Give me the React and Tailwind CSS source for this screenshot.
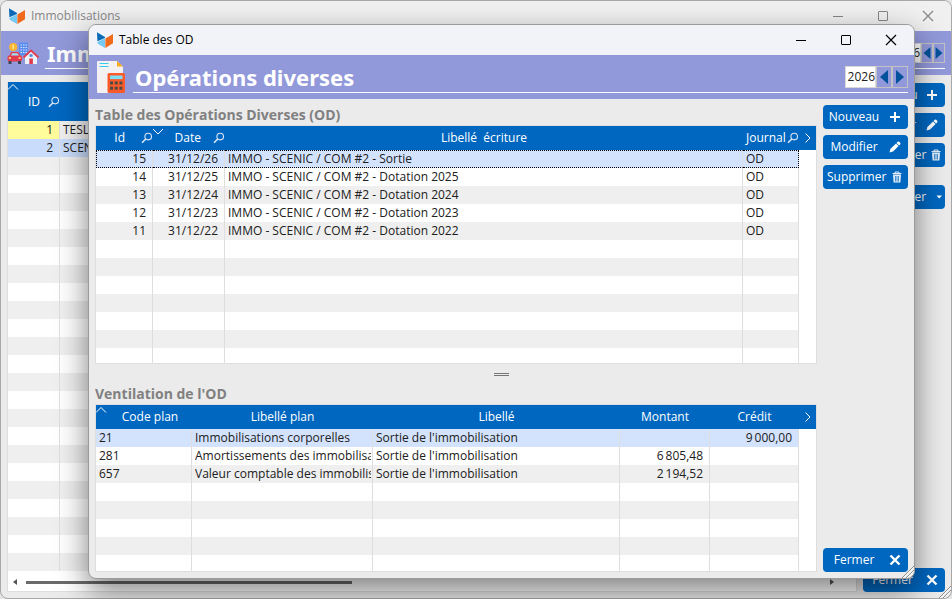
import React, { useState } from 'react';
import { clsx } from 'clsx';

const entries = [
  { id: 15, date: '31/12/26', label: 'IMMO - SCENIC / COM #2 - Sortie', journal: 'OD' },
  { id: 14, date: '31/12/25', label: 'IMMO - SCENIC / COM #2 - Dotation 2025', journal: 'OD' },
  { id: 13, date: '31/12/24', label: 'IMMO - SCENIC / COM #2 - Dotation 2024', journal: 'OD' },
  { id: 12, date: '31/12/23', label: 'IMMO - SCENIC / COM #2 - Dotation 2023', journal: 'OD' },
  { id: 11, date: '31/12/22', label: 'IMMO - SCENIC / COM #2 - Dotation 2022', journal: 'OD' },
];

const lines = [
  { code: '21', plan: 'Immobilisations corporelles', label: "Sortie de l'immobilisation", debit: '', credit: '9\u2009000,00' },
  { code: '281', plan: 'Amortissements des immobilisations', label: "Sortie de l'immobilisation", debit: '6\u2009805,48', credit: '' },
  { code: '657', plan: 'Valeur comptable des immobilisations', label: "Sortie de l'immobilisation", debit: '2\u2009194,52', credit: '' },
];

const assets = [
  { id: 1, name: 'TESLA' },
  { id: 2, name: 'SCENIC' },
];

// Fill a list up with blank rows so the stripes reach the bottom of the grid
const padRows = (rows, count) => [...rows, ...Array(Math.max(0, count - rows.length)).fill({})];

const Logo = () => (
  <svg viewBox="0 0 16 16" className="w-4 h-4 shrink-0">
    <path d="M0 0.3 L8 5 V6 L0.4 9.2 Z" fill="#0a6ab8" />
    <path d="M0.4 10 L8 6.4 V16 L0.8 11.8 Z" fill="#74c8f4" />
    <path d="M8.4 6.4 L16 2 V11.2 L8.4 16 Z" fill="#ef6a1c" />
  </svg>
);

const SearchIcon = () => (
  <svg viewBox="0 0 12 12" className="w-3 h-3 shrink-0" fill="none" stroke="#dbe7f5">
    <circle cx="7.2" cy="4.6" r="3.3" strokeWidth="1.1" />
    <path d="M4.8 7 L1 10.8" strokeWidth="1.6" />
  </svg>
);

const Chevron = ({ d, className }) => (
  <svg viewBox="0 0 12 12" className={clsx('w-3 h-3', className)} fill="none" stroke="#fff">
    <path d={d} />
  </svg>
);
const UP = 'M0 7.5 L5 2.5 L10 7.5';
const DOWN = 'M0 3 L5 8 L10 3';
const RIGHT = 'M3.5 1.5 L8 6 L3.5 10.5';

const PlusIcon = () => (
  <svg viewBox="0 0 12 12" className="w-3 h-3" stroke="#fff" strokeWidth="2"><path d="M6 1 V11 M1 6 H11" /></svg>
);
const PencilIcon = () => (
  <svg viewBox="0 0 12 12" className="w-3 h-3" fill="#fff">
    <path d="M0.5 11.5 L1.4 8 L7 2.4 L9.6 5 L4 10.6 Z" />
    <path d="M7.5 1.9 L8.7 0.8 Q9.5 0.2 10.2 0.8 L11.2 1.8 Q11.8 2.5 11.2 3.3 L10.1 4.5 Z" />
  </svg>
);
const TrashIcon = () => (
  <svg viewBox="0 0 12 12" className="w-3 h-3">
    <path d="M4 2 V1 H8 V2 M1.5 2.5 H10.5" fill="none" stroke="#e3edf8" />
    <path d="M2 3.5 H10 L9.4 11.6 H2.6 Z" fill="#e3edf8" />
    <path d="M4.5 5 V10.5 M6 5 V10.5 M7.5 5 V10.5" stroke="#0067c0" strokeWidth="0.7" />
  </svg>
);
const CrossIcon = () => (
  <svg viewBox="0 0 12 12" className="w-3 h-3" stroke="#fff" strokeWidth="2.4"><path d="M1.5 1.5 L10.5 10.5 M10.5 1.5 L1.5 10.5" /></svg>
);
const CaretIcon = () => (
  <svg viewBox="0 0 12 12" className="w-3 h-3" fill="#fff"><path d="M3.5 4.5 H9 L6.2 7.5 Z" /></svg>
);

const InvoiceIcon = () => (
  <svg viewBox="0 0 28 32" className="w-7 h-8 shrink-0">
    <path d="M0 1 Q0 0 1 0 H20 L26 6 V32 H1 Q0 32 0 31 Z" fill="#f4f1f3" />
    <path d="M20 0 L26 5.5 H20 Z" fill="#fbab18" />
    <path d="M2.5 2.5 H11.5 M2.5 5.5 H11.5" stroke="#34cdea" />
    <rect x="10.5" y="12" width="17.5" height="20" rx="1.5" fill="#fb5b2b" />
    <rect x="13" y="14.5" width="12.5" height="3.6" fill="#7fdff3" />
    <g fill="#4d4a44">
      <rect x="13" y="20.5" width="3" height="3" /><rect x="17.7" y="20.5" width="3" height="3" /><rect x="22.4" y="20.5" width="3" height="3" />
      <rect x="13" y="25.7" width="3" height="3" /><rect x="17.7" y="25.7" width="3" height="3" /><rect x="22.4" y="25.7" width="3" height="3" />
    </g>
  </svg>
);

const AssetsIcon = () => (
  <svg viewBox="0 0 32 24" className="w-8 h-6 shrink-0">
    <rect x="12" y="1.5" width="9" height="13" fill="#5b8def" />
    <path d="M13.5 4 H20 M13.5 6.5 H20 M13.5 9 H20 M13.5 11.5 H20" stroke="#cfe3ff" strokeDasharray="1.5 1" />
    <circle cx="6.2" cy="6" r="4" fill="#fdb62f" />
    <path d="M6.2 3.8 V8.2" stroke="#fff0b8" strokeWidth="1.2" />
    <path d="M3 15 L4.5 11.6 H11 L12.8 15" fill="#9be0f5" stroke="#e33b4e" strokeWidth="1.4" />
    <rect x="0.5" y="14.5" width="14.5" height="6" rx="2" fill="#e33b4e" />
    <path d="M1.5 20 H4.5 V23 H1.5 Z M11 20 H14 V23 H11 Z" fill="#3f4554" />
    <path d="M1.8 17 H4 M11.5 17 H13.7" stroke="#ffe08a" strokeWidth="1.4" />
    <rect x="18" y="15" width="12" height="8" fill="#eaf3fb" />
    <path d="M16.5 16.5 L24 9.5 L31.5 16.5" fill="#eaf3fb" stroke="#e33b4e" strokeWidth="1.8" />
    <rect x="22.3" y="17.5" width="3.6" height="5.5" fill="#e33b4e" />
    <rect x="22.6" y="13.2" width="3" height="2.6" fill="#4f86d9" />
  </svg>
);

const Grip = () => (
  <svg viewBox="0 0 12 12" className="absolute right-0 bottom-0 w-3 h-3" stroke="#8c8c8c">
    <path d="M0 12 L12 0 M4 12 L12 4 M8 12 L12 8" />
    <path d="M1.2 12 L12 1.2 M5.2 12 L12 5.2 M9.2 12 L12 9.2" stroke="#fff" />
  </svg>
);

function TitleBar({ title, muted }) {
  return (
    <header className={clsx('flex items-center pl-2 pr-4 h-[30px] shrink-0 text-xs', muted ? 'bg-[#f0f0f0] text-[#868686]' : 'bg-[#f1f3f9] text-black')}>
      <Logo />
      <span className="ml-[6px] flex-1">{title}</span>
      <div className="flex gap-[31px]">
        <button aria-label="Réduire"><svg viewBox="0 0 14 14" className="w-[14px] h-[14px]" stroke="currentColor"><path d="M2 7.5 H12" /></svg></button>
        <button aria-label="Agrandir"><svg viewBox="0 0 14 14" className="w-[14px] h-[14px]" fill="none" stroke="currentColor"><rect x="2.5" y="2.5" width="9" height="9" rx="0.5" /></svg></button>
        <button aria-label="Fermer la fenêtre"><svg viewBox="0 0 14 14" className="w-[14px] h-[14px]" stroke="currentColor" strokeWidth="1.2"><path d="M2 2 L12 12 M12 2 L2 12" /></svg></button>
      </div>
    </header>
  );
}

function YearPicker({ small }) {
  const [year, setYear] = useState(2026);
  const step = clsx('flex items-center justify-center border border-[#c3c3c3]', small ? 'w-3 h-5' : 'w-4 h-[22px]');
  return (
    <div className="flex">
      <input
        aria-label="Exercice"
        value={year}
        onChange={(e) => setYear(Number(e.target.value) || 0)}
        className={clsx('w-[31px] bg-white border border-[#d8d8d8] text-right text-xs text-[#202020]', small ? 'h-5' : 'h-[22px]')}
      />
      <button aria-label="Exercice précédent" className={step} onClick={() => setYear(year - 1)}>
        <svg viewBox="0 0 8 14" className={small ? 'w-2 h-3' : 'w-2 h-4'} fill="#00529b"><path d="M8 0 V14 L0 7 Z" /></svg>
      </button>
      <button aria-label="Exercice suivant" className={step} onClick={() => setYear(year + 1)}>
        <svg viewBox="0 0 8 14" className={small ? 'w-2 h-3' : 'w-2 h-4'} fill="#00529b"><path d="M0 0 V14 L8 7 Z" /></svg>
      </button>
    </div>
  );
}

function Banner({ icon, title, small }) {
  return (
    <div className={clsx('flex items-center h-11 shrink-0 bg-[#9299da] px-[6px]', small ? 'gap-[6px]' : 'pl-2 gap-2')}>
      {icon}
      <div className="flex flex-1 items-center justify-between h-8 pl-[2px] border-b border-white">
        <h1 className="font-['Noto_Sans'] text-[22px] leading-7 font-bold text-white">{title}</h1>
        <YearPicker small={small} />
      </div>
    </div>
  );
}

function ActionButton({ label, icon, menu, className }) {
  return (
    <button className={clsx('flex items-center h-6 w-full pl-1 rounded bg-[#0067c0] text-white text-xs whitespace-nowrap', className)}>
      <span className="flex-1 flex justify-center">{label}</span>
      <span className={clsx('flex justify-center', menu ? 'w-3' : 'w-[27px]')}>{icon}</span>
    </button>
  );
}

const headCell = 'h-6 p-0 font-normal text-white bg-[#0067c0] whitespace-nowrap';
const cell = 'h-[18px] py-0 px-[3px] leading-4 border-r border-[#dedede] overflow-hidden whitespace-nowrap';
const filler = 'bg-white p-0';

function EntriesTable({ selected, onSelect }) {
  return (
    <table className="w-full table-fixed border-separate border-spacing-0 text-xs text-[#202020]">
      <colgroup>
        <col className="w-[57px]" />
        <col className="w-[72px]" />
        <col />
        <col className="w-[56px]" />
        <col className="w-[17px]" />
      </colgroup>
      <thead>
        <tr>
          <th className={clsx(headCell, 'relative')}>
            <div className="flex items-center justify-end gap-4">Id <SearchIcon /></div>
            <Chevron d={DOWN} className="absolute top-0 -right-3" />
          </th>
          <th className={headCell}>
            <div className="flex items-center justify-end gap-3">Date <SearchIcon /></div>
          </th>
          <th className={headCell}>Libellé&nbsp; écriture</th>
          <th className={headCell}>
            <div className="flex items-center gap-px pl-[3px]">Journal <SearchIcon /></div>
          </th>
          <th className={headCell}><Chevron d={RIGHT} className="mx-auto" /></th>
        </tr>
      </thead>
      <tbody>
        {padRows(entries, 12).map((row, i) => {
          const focus = row.id !== undefined && row.id === selected;
          const box = focus && 'border-y border-y-black [border-top-style:dotted] [border-bottom-style:dotted]';
          return (
            <tr
              key={i}
              onClick={() => row.id && onSelect(row.id)}
              className={focus ? 'bg-[#d3e3fd]' : i % 2 ? 'bg-white' : 'bg-[#efefef]'}
            >
              <td className={clsx(cell, 'text-right pr-[6px]', box, focus && 'border-l border-l-black [border-left-style:dotted]')}>{row.id}</td>
              <td className={clsx(cell, 'text-right pr-[6px]', box)}>{row.date}</td>
              <td className={clsx(cell, box)}>{row.label}</td>
              <td className={clsx(cell, box, focus && 'border-r-black [border-right-style:dotted]')}>{row.journal}</td>
              <td className={filler} />
            </tr>
          );
        })}
      </tbody>
    </table>
  );
}

function LinesTable() {
  return (
    <table className="w-full table-fixed border-separate border-spacing-0 text-xs text-[#202020]">
      <colgroup>
        <col className="w-24" />
        <col className="w-[181px]" />
        <col />
        <col className="w-[90px]" />
        <col className="w-[89px]" />
        <col className="w-[17px]" />
      </colgroup>
      <thead>
        <tr>
          <th className={clsx(headCell, 'relative')}>
            <Chevron d={UP} className="absolute top-0 left-0" />
            <div className="pl-3">Code plan</div>
          </th>
          <th className={headCell}>Libellé plan</th>
          <th className={headCell}>Libellé</th>
          <th className={headCell}>Montant</th>
          <th className={headCell}>Crédit</th>
          <th className={headCell}><Chevron d={RIGHT} className="mx-auto" /></th>
        </tr>
      </thead>
      <tbody>
        {padRows(lines, 8).map((row, i) => (
          <tr key={i} className={i === 0 ? 'bg-[#d3e3fd]' : i % 2 ? 'bg-white' : 'bg-[#efefef]'}>
            <td className={cell}>{row.code}</td>
            <td className={clsx(cell, 'pr-px')}><div className="overflow-hidden">{row.plan}</div></td>
            <td className={cell}>{row.label}</td>
            <td className={clsx(cell, 'text-right pr-[6px]')}>{row.debit}</td>
            <td className={clsx(cell, 'text-right pr-[6px]')}>{row.credit}</td>
            <td className={filler} />
          </tr>
        ))}
      </tbody>
    </table>
  );
}

function AssetsWindow() {
  return (
    <div className="relative flex flex-col h-full rounded-lg border border-[#a8a8a8] bg-[#ebebeb] overflow-hidden">
      <TitleBar title="Immobilisations" muted />
      <Banner icon={<AssetsIcon />} title="Immobilisations" small />
      <div className="flex flex-1 min-h-0 gap-[6px] pt-[7px] px-[6px] pb-[6px]">
        <div className="flex flex-col flex-1 min-w-0 border border-t-0 border-[#dedede] bg-white">
          <div className="flex-1 min-h-0 overflow-hidden">
            <table className="w-full table-fixed border-separate border-spacing-0 text-xs text-[#202020]">
              <colgroup>
                <col className="w-[52px]" />
                <col />
              </colgroup>
              <thead>
                <tr>
                  <th className="relative h-[39px] p-0 font-normal text-white bg-[#0067c0]">
                    <Chevron d={UP} className="absolute top-0 left-0" />
                    <div className="flex items-center justify-end gap-2">ID <SearchIcon /></div>
                  </th>
                  <th className="p-0 bg-[#0067c0]" />
                </tr>
              </thead>
              <tbody>
                {padRows(assets, 25).map((row, i) => (
                  <tr key={i} className={i === 1 ? 'bg-[#c9dcfb]' : i % 2 ? 'bg-white' : 'bg-[#efefef]'}>
                    <td className={clsx(cell, 'text-right pr-[6px]', i === 0 && 'bg-[#fffc9c]')}>{row.id}</td>
                    <td className={cell}>{row.name}</td>
                  </tr>
                ))}
              </tbody>
            </table>
          </div>
          <div className="flex items-center h-[18px] shrink-0 px-1 pr-[21px]">
            <svg viewBox="0 0 6 6" className="w-[6px] h-[6px]" fill="#555"><path d="M5 0 V6 L1 3 Z" /></svg>
            <div className="flex-1 mx-2">
              <div className="w-[41%] h-[3px] bg-[#6a6a6a]" />
            </div>
            <svg viewBox="0 0 6 6" className="w-[6px] h-[6px]" fill="#555"><path d="M1 0 V6 L5 3 Z" /></svg>
          </div>
        </div>
        <div className="flex flex-col gap-[6px] w-[82px] pt-px">
          <ActionButton label="Nouveau" icon={<PlusIcon />} />
          <ActionButton label="Modifier" icon={<PencilIcon />} />
          <ActionButton label="Supprimer" icon={<TrashIcon />} />
          <ActionButton label="Imprimer" icon={<CaretIcon />} menu className="mt-3" />
          <ActionButton label="Fermer" icon={<CrossIcon />} className="mt-auto" />
        </div>
      </div>
      <Grip />
    </div>
  );
}

function EntriesWindow() {
  const [selected, setSelected] = useState(15);
  return (
    <div className="absolute top-6 right-[37px] bottom-5 left-[88px] flex flex-col rounded-lg border border-[#9a9a9a] bg-[#ebebeb] overflow-hidden shadow-[0_12px_30px_rgba(0,0,0,0.5)]">
      <TitleBar title="Table des OD" />
      <Banner icon={<InvoiceIcon />} title="Opérations diverses" />
      <div className="flex flex-1 min-h-0 gap-[6px] px-[6px] pt-[6px] pb-[6px]">
        <div className="flex flex-col flex-1 min-w-0">
          <h2 className="text-sm leading-5 font-bold text-[#808080]">Table des Opérations Diverses (OD)</h2>
          <div className="flex-1 min-h-0 overflow-hidden border border-[#dedede] bg-white">
            <EntriesTable selected={selected} onSelect={setSelected} />
          </div>
          {/* Splitter, centred on the whole window rather than on the grids */}
          <div className="flex items-center justify-center h-5 shrink-0 pl-[91px]">
            <div className="w-[15px] h-[3px] border-y border-[#757575]" />
          </div>
          <h2 className="text-sm leading-5 font-bold text-[#808080]">Ventilation de l'OD</h2>
          <div className="h-42 shrink-0 overflow-hidden border border-[#dedede] bg-white">
            <LinesTable />
          </div>
        </div>
        <div className="flex flex-col gap-[6px] w-[85px]">
          <ActionButton label="Nouveau" icon={<PlusIcon />} />
          <ActionButton label="Modifier" icon={<PencilIcon />} />
          <ActionButton label="Supprimer" icon={<TrashIcon />} />
          <ActionButton label="Fermer" icon={<CrossIcon />} className="mt-auto" />
        </div>
      </div>
      <Grip />
    </div>
  );
}

export default function App() {
  return (
    <div className="relative h-screen overflow-hidden bg-[#e4e4e4] font-['Open_Sans','Noto_Sans',sans-serif]">
      <AssetsWindow />
      <EntriesWindow />
    </div>
  );
}
